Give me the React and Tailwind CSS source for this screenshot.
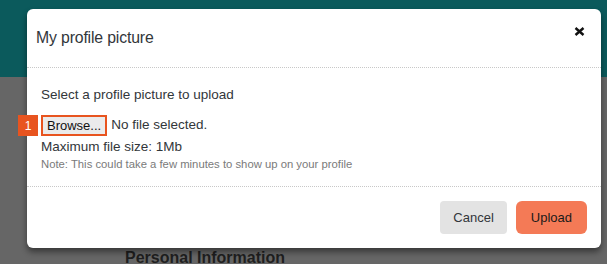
import React from "react";

const App = () => {
  return (
    <div className="relative w-[607px] h-[264px] overflow-hidden font-['Liberation_Sans',Arial,sans-serif]">
      <div className="h-[77px] bg-[#0b5a5c]"></div>
      <div className="h-[187px] bg-[#666666] pl-[125px] pt-[173px]">
        <p className="text-[16px] font-bold text-[#1f1f1f] leading-none">Personal Information</p>
      </div>

      <div className="absolute left-[27px] top-[9px] w-[574px] h-[239px] bg-white rounded-[6px] shadow-[0_4px_6px_rgba(0,0,0,0.45)] flex flex-col">
        <div className="relative h-[59px] flex items-center pl-[9px] border-b border-dotted border-[#c8c8c8]">
          <h1 className="text-[15.8px] tracking-[-0.15px] text-[#32363a]">My profile picture</h1>
          <svg className="absolute right-[16px] top-[18px]" width="11" height="9" viewBox="0 0 11 9">
            <path d="M1.5 1 L9.5 8 M9.5 1 L1.5 8" stroke="#111" strokeWidth="2.4" strokeLinecap="butt" />
          </svg>
        </div>

        <div className="flex-1 pl-[14px] pt-[19px] border-b border-dotted border-[#c8c8c8]">
          <p className="text-[13.5px] text-[#32363a] leading-[16px]">Select a profile picture to upload</p>
          <div className="relative mt-[12px] flex items-center gap-[4px]">
            <span className="absolute left-[-23px] top-0 w-[20px] h-[21px] bg-[#e8541f] text-white text-[12px] flex items-center justify-center">1</span>
            <button className="h-[21px] px-[4px] border-2 border-[#e8541f] bg-[#ebebeb] text-[13px] text-[#111] leading-none">Browse...</button>
            <span className="text-[13.5px] text-[#32363a]">No file selected.</span>
          </div>
          <p className="mt-[2px] text-[13.5px] text-[#32363a] leading-[17px]">Maximum file size: 1Mb</p>
          <p className="mt-[2px] text-[11.3px] text-[#7a7a7a] leading-[14px]">Note: This could take a few minutes to show up on your profile</p>
        </div>

        <div className="h-[61px] flex items-center justify-end gap-[9px] pr-[14px]">
          <button className="h-[33px] px-[13px] rounded-[4px] bg-[#e3e3e3] text-[13px] text-[#32363a]">Cancel</button>
          <button className="h-[33px] px-[15px] rounded-[6px] bg-[#f47a56] text-[13px] text-[#1a1a1a]">Upload</button>
        </div>
      </div>
    </div>
  );
};

export default App;
